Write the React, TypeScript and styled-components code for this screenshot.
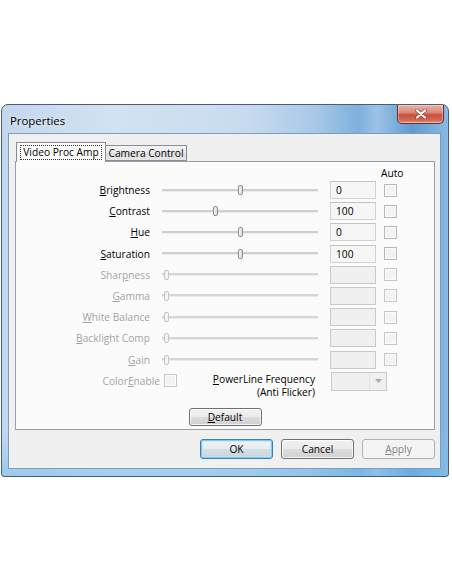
import React from 'react';
import styled, { createGlobalStyle, css } from 'styled-components';

const GlobalStyle = createGlobalStyle`
  html, body {
    margin: 0;
    padding: 0;
    background: #ffffff;
  }
  body {
    font-family: "Segoe UI", "Open Sans", "Noto Sans", sans-serif;
    font-size: 10.2px;
    color: #000;
  }
`;

const Page = styled.div`
  padding: 104px 0 0 1px;
`;

const Window = styled.div`
  width: 448px;
  height: 373px;
  box-sizing: border-box;
  display: flex;
  flex-direction: column;
  padding: 0 7px 7px 6px;
  border: 1px solid #4b5d73;
  border-radius: 7px 7px 3px 3px;
  background:
    linear-gradient(180deg, rgba(255, 255, 255, 0) 88%, rgba(120, 190, 235, 0.55) 100%),
    linear-gradient(90deg, #c3d7ec 0%, #d3e2f2 25%, #c8dbee 55%, #a9c8e7 70%, #7db0dd 80%, #9cc3e6 84%, #5f9bd3 92%, #8ab9e3 100%);
`;

const TitleBar = styled.div`
  height: 28px;
  flex-shrink: 0;
  display: flex;
  align-items: flex-start;
  justify-content: space-between;
`;

const Title = styled.div`
  margin: 8px 0 0 2px;
  font-size: 11.4px;
  line-height: 16px;
  color: #000;
  text-shadow: 0 0 6px rgba(255, 255, 255, 0.9);
`;

const CloseButton = styled.div`
  width: 47px;
  height: 19px;
  margin-right: -3px;
  box-sizing: border-box;
  border: 1px solid #6b2c25;
  border-top: none;
  border-radius: 0 0 5px 5px;
  background: linear-gradient(180deg, #eab1a5 0%, #dd8c7c 40%, #c8503c 55%, #cf6a55 85%, #e29a86 100%);
  box-shadow: inset 0 0 0 1px rgba(255, 255, 255, 0.35);
  display: flex;
  align-items: center;
  justify-content: center;
`;

const Client = styled.div`
  flex: 1;
  display: flex;
  flex-direction: column;
  background: #f0f0f0;
  border: 1px solid #7e9cbc;
  padding: 8px 5px 6px 6px;
`;

const TabStrip = styled.div`
  display: flex;
  align-items: flex-end;
  height: 19px;
  padding-left: 1px;
`;

const Tab = styled.div<{ $active?: boolean }>`
  box-sizing: border-box;
  display: flex;
  align-items: center;
  justify-content: center;
  white-space: nowrap;
  border: 1px solid #898c95;
  ${(p) =>
    p.$active
      ? css`
          width: 90px;
          height: 20px;
          margin-bottom: -1px;
          border-bottom: none;
          background: #fcfcfc;
          position: relative;
          z-index: 1;
        `
      : css`
          width: 81px;
          height: 16px;
          border-left: none;
          background: linear-gradient(180deg, #f4f4f4 0%, #ebebeb 50%, #dedede 51%, #e6e6e6 100%);
        `}
`;

const FocusText = styled.span`
  padding: 0 2px;
  line-height: 13px;
  outline: 1px dotted #333;
  outline-offset: 0;
`;

const Panel = styled.div`
  box-sizing: border-box;
  height: 269px;
  border: 1px solid #9a9ea6;
  background: #fbfbfb;
  padding: 3px 0 0 0;
  display: flex;
  flex-direction: column;
`;

const AutoHeader = styled.div`
  height: 16px;
  line-height: 16px;
  padding-left: 365px;
`;

const Grid = styled.div`
  display: grid;
  grid-template-columns: 134px 168px 58px 21px;
  grid-auto-rows: 18px;
  row-gap: 3.2px;
  align-items: center;
`;

const Label = styled.div<{ $disabled?: boolean }>`
  text-align: right;
  white-space: nowrap;
  line-height: 18px;
  color: ${(p) => (p.$disabled ? '#a3a3a3' : '#000')};
`;

const SliderCell = styled.div`
  position: relative;
  height: 18px;
  margin-left: 12px;
  display: flex;
  align-items: center;
`;

const Track = styled.div<{ $disabled?: boolean }>`
  flex: 1;
  height: 2px;
  background: ${(p) => (p.$disabled ? '#d6d6d6' : '#cfcfcf')};
  border-bottom: 1px solid #ececec;
`;

const Thumb = styled.div<{ $disabled?: boolean }>`
  position: absolute;
  top: 4px;
  width: 5px;
  height: 10px;
  box-sizing: border-box;
  border: 1px solid ${(p) => (p.$disabled ? '#c4c4c4' : '#8e8e8e')};
  border-radius: 2px;
  background: ${(p) => (p.$disabled ? '#f4f4f4' : 'linear-gradient(90deg, #f5f5f5, #dcdcdc)')};
`;

const Edit = styled.div<{ $disabled?: boolean }>`
  justify-self: end;
  width: 46px;
  height: 18px;
  box-sizing: border-box;
  display: flex;
  align-items: center;
  padding-left: 5px;
  border: 1px solid #d2d2d2;
  border-top-color: #c2c2c2;
  background: ${(p) => (p.$disabled ? '#f0f0f0' : '#f6f6f6')};
  ${(p) =>
    p.$disabled &&
    css`
      border-color: #c9c9c9;
    `}
`;

const Check = styled.div<{ $disabled?: boolean }>`
  justify-self: end;
  width: 13px;
  height: 13px;
  box-sizing: border-box;
  border: 1px solid ${(p) => (p.$disabled ? '#c6c6c6' : '#b8b8b8')};
  background: #f3f3f3;
  box-shadow: inset 0 0 0 1px #fbfbfb;
`;

const ColorRow = styled.div`
  margin-top: 3.4px;
  height: 28px;
  display: grid;
  grid-template-columns: 148px 13px 139px 71px;
  align-items: start;
`;

const ColorLabel = styled.div`
  text-align: right;
  padding-right: 4px;
  line-height: 19px;
  color: #a3a3a3;
`;

const ColorCheck = styled(Check)`
  margin-top: 2px;
`;

const PowerLabel = styled.div`
  text-align: right;
  line-height: 13px;
  margin-top: 1px;
  padding-right: 1px;
  white-space: nowrap;
`;

const Combo = styled.div`
  justify-self: end;
  width: 56px;
  height: 19px;
  box-sizing: border-box;
  border: 1px solid #cacaca;
  background: #f0f0f0;
  display: flex;
  justify-content: flex-end;
`;

const ComboArrow = styled.div`
  width: 16px;
  border-left: 1px solid #e2e2e2;
  display: flex;
  align-items: center;
  justify-content: center;
`;

const Button = styled.div<{ $default?: boolean; $disabled?: boolean }>`
  width: 73px;
  height: 20px;
  box-sizing: border-box;
  display: flex;
  align-items: center;
  justify-content: center;
  border: 1px solid #707070;
  border-radius: 3px;
  background: linear-gradient(180deg, #f2f2f2 0%, #ebebeb 48%, #dddddd 52%, #cfcfcf 100%);
  box-shadow: inset 0 0 0 1px rgba(255, 255, 255, 0.8);
  color: #000;
  ${(p) =>
    p.$default &&
    css`
      border-color: #3c7fb1;
      box-shadow: inset 0 0 0 1px #7fcaf0, inset 0 0 0 2px rgba(190, 230, 250, 0.7);
      background: linear-gradient(180deg, #f0f4f7 0%, #e6ecf0 48%, #d6dee4 52%, #cad4dc 100%);
    `}
  ${(p) =>
    p.$disabled &&
    css`
      border-color: #adb2b5;
      background: #f4f4f4;
      box-shadow: none;
      color: #838383;
    `}
`;

const DefaultButton = styled(Button)`
  height: 18px;
  margin-top: 8px;
  align-self: center;
`;

const ButtonRow = styled.div`
  display: flex;
  justify-content: flex-end;
  gap: 8px;
  margin-top: 9px;
`;

const U = styled.span`
  text-decoration: underline;
  text-underline-offset: 1px;
`;

type Prop = {
  pre: string;
  key0: string;
  post: string;
  value?: string;
  pos: number;
  disabled?: boolean;
};

const props: Prop[] = [
  { pre: '', key0: 'B', post: 'rightness', value: '0', pos: 0.5 },
  { pre: '', key0: 'C', post: 'ontrast', value: '100', pos: 0.33 },
  { pre: '', key0: 'H', post: 'ue', value: '0', pos: 0.5 },
  { pre: '', key0: 'S', post: 'aturation', value: '100', pos: 0.5 },
  { pre: 'Shar', key0: 'p', post: 'ness', pos: 0, disabled: true },
  { pre: '', key0: 'G', post: 'amma', pos: 0, disabled: true },
  { pre: '', key0: 'W', post: 'hite Balance', pos: 0, disabled: true },
  { pre: '', key0: 'B', post: 'acklight Comp', pos: 0, disabled: true },
  { pre: '', key0: 'G', post: 'ain', pos: 0, disabled: true },
];

const CloseIcon = () => (
  <svg width="12" height="10" viewBox="0 0 12 10">
    <path d="M2 1.5 L10 8.5 M10 1.5 L2 8.5" stroke="#5a1d16" strokeWidth="3.6" strokeLinecap="round" opacity="0.55" />
    <path d="M2 1.5 L10 8.5 M10 1.5 L2 8.5" stroke="#ffffff" strokeWidth="2.2" strokeLinecap="round" />
  </svg>
);

const ArrowIcon = () => (
  <svg width="7" height="4" viewBox="0 0 7 4">
    <path d="M0 0 H7 L3.5 4 Z" fill="#a8a8a8" />
  </svg>
);

const App = () => {
  return (
    <Page>
      <GlobalStyle />
      <Window>
        <TitleBar>
          <Title>Properties</Title>
          <CloseButton>
            <CloseIcon />
          </CloseButton>
        </TitleBar>
        <Client>
          <TabStrip>
            <Tab $active>
              <FocusText>Video Proc Amp</FocusText>
            </Tab>
            <Tab>Camera Control</Tab>
          </TabStrip>
          <Panel>
            <AutoHeader>Auto</AutoHeader>
            <Grid>
              {props.map((p, i) => (
                <React.Fragment key={i}>
                  <Label $disabled={p.disabled}>
                    {p.pre}
                    <U>{p.key0}</U>
                    {p.post}
                  </Label>
                  <SliderCell>
                    <Track $disabled={p.disabled} />
                    <Thumb
                      $disabled={p.disabled}
                      style={{ left: `calc((100% - 8px) * ${p.pos} + 2px)` }}
                    />
                  </SliderCell>
                  <Edit $disabled={p.disabled}>{p.value}</Edit>
                  <Check $disabled={p.disabled} />
                </React.Fragment>
              ))}
            </Grid>
            <ColorRow>
              <ColorLabel>
                Color<U>E</U>nable
              </ColorLabel>
              <ColorCheck $disabled />
              <PowerLabel>
                <U>P</U>owerLine Frequency
                <br />
                (Anti Flicker)
              </PowerLabel>
              <Combo>
                <ComboArrow>
                  <ArrowIcon />
                </ComboArrow>
              </Combo>
            </ColorRow>
            <DefaultButton>
              <span>
                <U>D</U>efault
              </span>
            </DefaultButton>
          </Panel>
          <ButtonRow>
            <Button $default>OK</Button>
            <Button>Cancel</Button>
            <Button $disabled>
              <span>
                <U>A</U>pply
              </span>
            </Button>
          </ButtonRow>
        </Client>
      </Window>
    </Page>
  );
};

export default App;
